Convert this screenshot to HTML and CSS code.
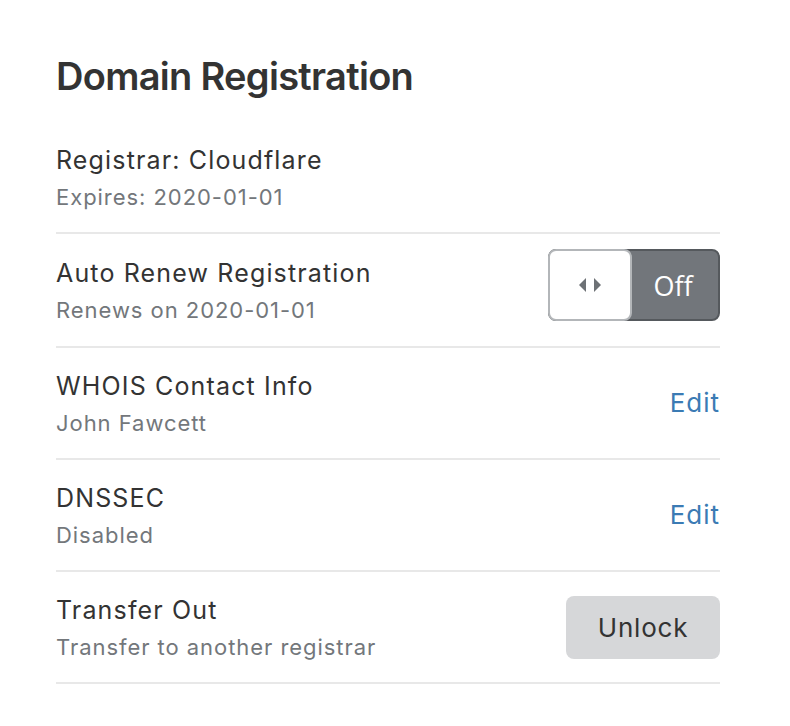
FILE: index.html
```html
<!DOCTYPE html>
<html>
<head>
<meta charset="utf-8">
<link rel="stylesheet" href="styles.css">
</head>
<body>
<div class="card">
  <h1 class="title">Domain Registration</h1>
  <div class="row">
    <div class="info">
      <div class="label">Registrar: Cloudflare</div>
      <div class="sub">Expires: 2020-01-01</div>
    </div>
  </div>
  <div class="row">
    <div class="info">
      <div class="label">Auto Renew Registration</div>
      <div class="sub">Renews on 2020-01-01</div>
    </div>
    <div class="toggle">
      <div class="knob">
        <svg width="24" height="16" viewBox="0 0 24 16"><path d="M8 1 L1 8 L8 15 Z" fill="#6d7175"/><path d="M16 1 L23 8 L16 15 Z" fill="#6d7175"/></svg>
      </div>
      <div class="state">Off</div>
    </div>
  </div>
  <div class="row">
    <div class="info">
      <div class="label">WHOIS Contact Info</div>
      <div class="sub">John Fawcett</div>
    </div>
    <a class="link">Edit</a>
  </div>
  <div class="row">
    <div class="info">
      <div class="label">DNSSEC</div>
      <div class="sub">Disabled</div>
    </div>
    <a class="link">Edit</a>
  </div>
  <div class="row">
    <div class="info">
      <div class="label">Transfer Out</div>
      <div class="sub">Transfer to another registrar</div>
    </div>
    <button class="btn">Unlock</button>
  </div>
</div>
</body>
</html>
```
FILE: styles.css
```css
html, body {
  margin: 0;
  padding: 0;
  background: #fff;
}
body {
  font-family: Inter, "Noto Sans", sans-serif;
  color: #333;
}
.card {
  width: 664px;
  padding: 52px 0 0 56px;
}
.title {
  margin: 0 0 22px 0;
  font-size: 38px;
  line-height: 48px;
  font-weight: 600;
  color: #333;
  letter-spacing: -0.7px;
}
.row {
  display: flex;
  align-items: center;
  justify-content: space-between;
  padding: 20px 0;
  border-bottom: 2px solid #e8e8e8;
}
.info {
  display: flex;
  flex-direction: column;
}
.label {
  font-size: 25px;
  line-height: 36px;
  letter-spacing: 1.15px;
  color: #333;
}
.sub {
  margin-top: 4px;
  font-size: 22px;
  line-height: 30px;
  letter-spacing: 0.95px;
  color: #73777b;
}
.toggle {
  display: flex;
  width: 172px;
  height: 72px;
  margin: -5px 0 5px 0;
  box-sizing: border-box;
  background: #72767b;
  border: 2px solid #55595d;
  border-radius: 8px;
}
.knob {
  width: 84px;
  height: 72px;
  margin: -2px 0 0 -2px;
  box-sizing: border-box;
  background: #fff;
  border: 2px solid #b3b6b9;
  border-radius: 8px;
  display: flex;
  align-items: center;
  justify-content: center;
}
.state {
  flex: 1;
  display: flex;
  align-items: center;
  justify-content: center;
  color: #fff;
  font-family: "Open Sans", sans-serif;
  font-size: 27px;
  padding-right: 4px;
}
.link {
  color: #3b7bb4;
  font-size: 26px;
  line-height: 36px;
  letter-spacing: 1px;
}
.btn {
  width: 154px;
  height: 63px;
  border: none;
  border-radius: 8px;
  background: #d6d7d9;
  color: #333;
  font-family: Inter, "Noto Sans", sans-serif;
  font-size: 26px;
  letter-spacing: 0.8px;
  padding: 0;
}
```
